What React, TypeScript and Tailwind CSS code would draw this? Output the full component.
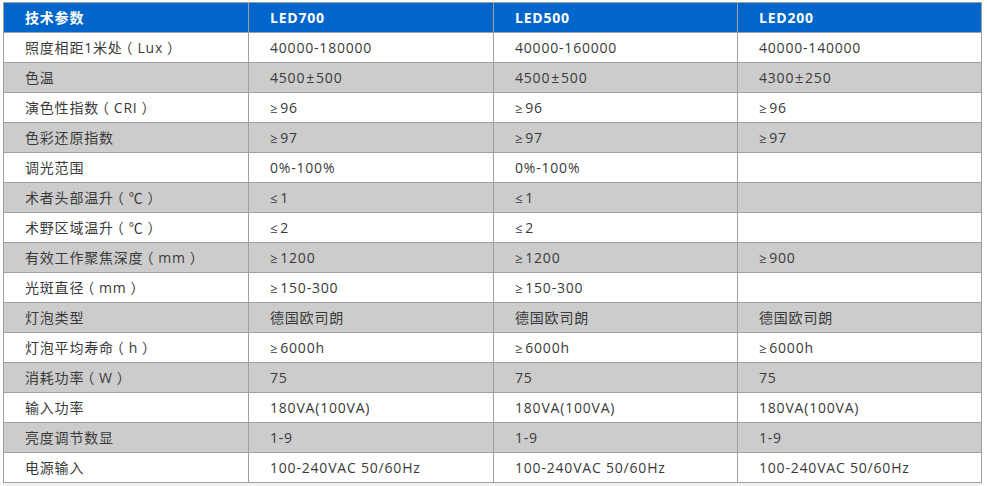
import React from "react";

const header = ["技术参数", "LED700", "LED500", "LED200"];
const rows: string[][] = [
  ["照度相距1米处（Lux）", "40000-180000", "40000-160000", "40000-140000"],
  ["色温", "4500±500", "4500±500", "4300±250"],
  ["演色性指数（CRI）", "≥96", "≥96", "≥96"],
  ["色彩还原指数", "≥97", "≥97", "≥97"],
  ["调光范围", "0%-100%", "0%-100%", ""],
  ["术者头部温升（℃）", "≤1", "≤1", ""],
  ["术野区域温升（℃）", "≤2", "≤2", ""],
  ["有效工作聚焦深度（mm）", "≥1200", "≥1200", "≥900"],
  ["光斑直径（mm）", "≥150-300", "≥150-300", ""],
  ["灯泡类型", "德国欧司朗", "德国欧司朗", "德国欧司朗"],
  ["灯泡平均寿命（h）", "≥6000h", "≥6000h", "≥6000h"],
  ["消耗功率（W）", "75", "75", "75"],
  ["输入功率", "180VA(100VA)", "180VA(100VA)", "180VA(100VA)"],
  ["亮度调节数显", "1-9", "1-9", "1-9"],
  ["电源输入", "100-240VAC 50/60Hz", "100-240VAC 50/60Hz", "100-240VAC 50/60Hz"],
];

const font = { fontFamily: '"Open Sans", "Noto Sans CJK SC", sans-serif' };

function Cell({ text }: { text: string }) {
  const parts = text.split(/([（）≥≤±])/);
  return (
    <>
      {parts.map((p, i) => {
        if (p === "（")
          return (
            <span key={i} className="inline-block ml-[3px] mr-[4px] [font-feature-settings:'halt']">
              {p}
            </span>
          );
        if (p === "）")
          return (
            <span key={i} className="inline-block ml-[4px] mr-[3px] [font-feature-settings:'halt']">
              {p}
            </span>
          );
        if (p === "≥" || p === "≤")
          return (
            <span key={i} className="inline-block mr-[2px] text-[13px]">
              {p}
            </span>
          );
        if (p === "±")
          return (
            <span key={i} className="inline-block mx-[1px]">
              {p}
            </span>
          );
        return <React.Fragment key={i}>{p}</React.Fragment>;
      })}
    </>
  );
}

export default function App() {
  return (
    <div className="w-[987px] h-[486px] bg-white" style={font}>
      <div className="pt-[2px] pl-[3px]">
        <div className="w-[979px] border-l border-t border-[#a0a0a0]">
          <div className="grid grid-cols-[245px_245px_244px_244px] bg-[#0066cc]">
            {header.map((h, i) => (
              <div
                key={i}
                className="h-[30px] border-r border-b border-[#a0a0a0] pl-[21px] flex items-center text-[14px] font-bold text-white tracking-[0.8px]"
              >
                {h}
              </div>
            ))}
          </div>
          {rows.map((r, ri) => (
            <div
              key={ri}
              className={`grid grid-cols-[245px_245px_244px_244px] ${ri % 2 === 1 ? "bg-[#cccccc]" : "bg-white"}`}
            >
              {r.map((c, ci) => (
                <div
                  key={ci}
                  className="h-[30px] border-r border-b border-[#a0a0a0] pl-[21px] flex items-center text-[14px] text-[#3a3a3a] tracking-[0.8px] whitespace-nowrap"
                >
                  <span>
                    <Cell text={c} />
                  </span>
                </div>
              ))}
            </div>
          ))}
        </div>
        <div className="w-[979px] h-[4px] bg-[#f2f2f2]" />
      </div>
    </div>
  );
}
